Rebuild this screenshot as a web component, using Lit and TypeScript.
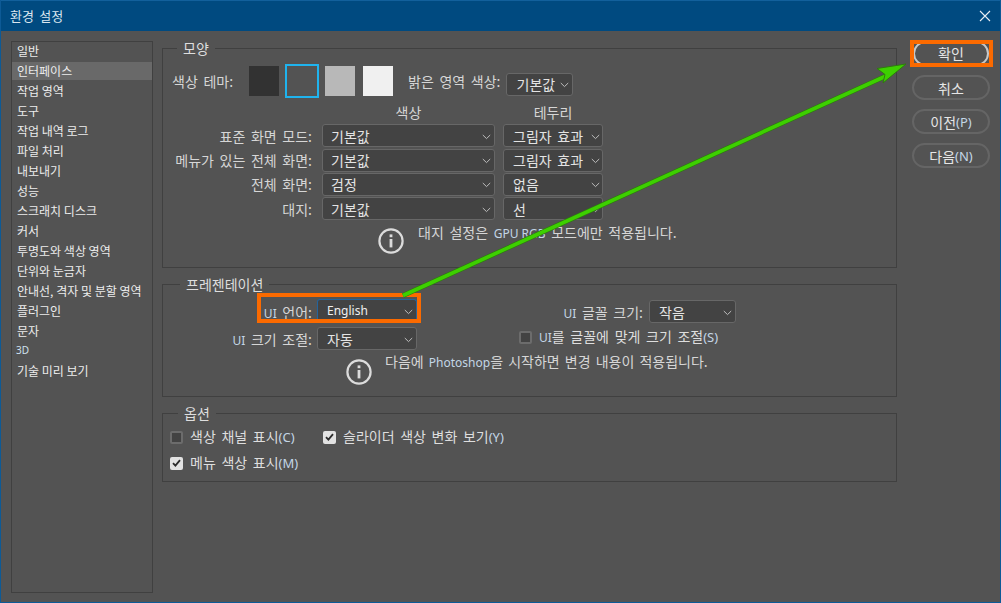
import { LitElement, html, css, svg } from "lit";
import { customElement } from "lit/decorators.js";

const NAV = ["일반","인터페이스","작업 영역","도구","작업 내역 로그","파일 처리","내보내기","성능","스크래치 디스크","커서","투명도와 색상 영역","단위와 눈금자","안내선, 격자 및 분할 영역","플러그인","문자","3D","기술 미리 보기"];

const chevron = html`<svg class="chev" width="9" height="6" viewBox="0 0 9 6"><path d="M.8 1 4.5 4.6 8.2 1" fill="none" stroke="#bdbdbd" stroke-width="1"/></svg>`;
const sel = (text: unknown, cls: string) => html`<div class="select ${cls}"><span>${text}</span>${chevron}</div>`;
const info = html`<svg class="info" width="26" height="26" viewBox="0 0 26 26"><circle cx="13" cy="13" r="11.6" fill="none" stroke="#dcdcdc" stroke-width="2.2"/><rect x="11.6" y="11" width="2.8" height="8.4" fill="#dcdcdc"/><rect x="11.6" y="6.4" width="2.8" height="2.8" fill="#dcdcdc"/></svg>`;
const check = (on: boolean, label: unknown) => html`<div class="check"><span class="box ${on ? "on" : ""}">${on ? html`<svg width="9" height="8" viewBox="0 0 9 8"><path d="M1 4.2 3.4 6.6 8 1.2" fill="none" stroke="#2b2b2b" stroke-width="1.8"/></svg>` : ""}</span><span class="lb">${label}</span></div>`;

@customElement("app-root")
export class AppRoot extends LitElement {
  static styles = css`
    :host { display: block; width: 1001px; height: 603px; position: relative; overflow: hidden;
      font-family: "Noto Sans CJK KR", sans-serif; font-size: 14px; color: #d6d6d6; word-spacing: 2.5px; }
    * { box-sizing: border-box; }
    .win { width: 100%; height: 100%; display: flex; flex-direction: column; background: #535353; border: 1px solid #0d5a96; border-top: 0; }
    .title { height: 31px; flex: none; background: #004a80; border-top: 1px solid #12609c; display: flex; align-items: center; justify-content: space-between;
      padding: 0 9px 1px 9px; color: #dbe6ef; font-size: 13px; }
    .title svg { display: block; }
    .content { flex: 1; min-height: 0; display: flex; padding: 10px 10px 9px 10px; }
    .nav { width: 142px; flex: none; border: 1px solid #404040; padding: 0; display: flex; flex-direction: column; gap: 2px; font-size: 12px; color: #ececec; word-spacing: 0; }
    .nav div { height: 18px; line-height: 17px; padding-left: 5px; white-space: nowrap; }
    .nav div.sel { background: #696969; }
    .nav .n3d { font-family: "Noto Sans", sans-serif; font-size: 10px; color: #cfe0ee; padding-left: 4px; }
    .main { width: 735px; flex: none; margin-left: 9px; padding-top: 7px; display: flex; flex-direction: column; gap: 16px; }
    .group { position: relative; border: 1px solid #404040; }
    .legend { position: absolute; top: -10px; background: #535353; height: 18px; line-height: 18px; padding: 0 6px; font-size: 14px; color: #dedede; }
    .g1 { height: 220px; } .g2 { height: 113px; } .g3 { height: 69px; }
    .theme { display: flex; align-items: center; height: 34px; margin: 15px 0 0 9px; }
    .swatch { width: 30px; height: 30px; flex: none; }
    .s1 { background: #323232; margin-left: 16px; }
    .s2 { width: 34px; height: 34px; background: #535353; border: 2px solid #1fb3ee; margin-left: 6px; }
    .s3 { background: #b8b8b8; margin-left: 6px; }
    .s4 { background: #f0f0f0; margin-left: 8px; }
    .hl { margin-left: 15px; }
    .w67 { width: 67px; height: 22px; margin-left: 5px; margin-top: 6px; padding-left: 9px; }
    .tbl { display: grid; grid-template-columns: 149px 183px 108px; grid-template-rows: 22px repeat(4, 23px); row-gap: 1.33px; margin-top: 3px; align-items: center; }
    .tbl .lab { text-align: right; white-space: nowrap; }
    .tbl .h { text-align: center; margin-top: -1px; }
    .tbl .select { margin-left: 10px; width: 173px; padding-left: 8px; }
    .tbl .select.c2 { margin-left: 8px; width: 100px; padding-left: 9px; padding-right: 2px; }
    .tbl .hc2 { margin-left: 8px; }
    .tbl .hc1 { margin-left: 10px; }
    .select { height: 23px; background: #434343; border: 1px solid #676767; border-radius: 3px; display: flex; align-items: center; justify-content: space-between;
      padding: 0 3px 0 10px; color: #e4e4e4; white-space: nowrap; flex: none; }
    .select span { line-height: 20px; }
    .chev { flex: none; display: block; margin-top: 2px; }
    .note { display: flex; align-items: flex-start; gap: 14px; white-space: nowrap; }
    .info { flex: none; display: block; margin-top: 5px; }
    .note span.t { line-height: 18px; }
    .n1 { margin: 3px 0 0 215px; }
    .n2 { margin: 2px 0 0 183px; gap: 13px; word-spacing: 2px; }
    .n2 .info { margin-top: 7px; }
    .en { font-family: "Noto Sans", sans-serif; font-size: 12px; color: #c3d6e6; word-spacing: 0; }
    .par { font-family: "Noto Sans", sans-serif; font-size: 13px; color: #c3d6e6; word-spacing: 0; }
    .pt { display: grid; grid-template-columns: 149px 105px 226px 93px; grid-template-rows: 23px 23px; row-gap: 4px; margin-top: 15px; align-items: center; }
    .pt .lab { text-align: right; white-space: nowrap; }
    .pt .select { width: 100px; margin-left: 5px; padding-left: 9px; }
    .pt .select.lang { height: 24px; margin-top: -1px; border-color: #24649c; border-bottom-color: #434343; }
    .pt .select.lang span { font-family: "Noto Sans", sans-serif; font-size: 12px; color: #f0f0f0; }
    .pt .select.small { width: 87px; margin-left: 6px; }
    .pt .chk { grid-column: 3 / span 2; margin-left: 102px; margin-top: -2px; }
    .opts { display: grid; grid-template-columns: 153px auto; grid-template-rows: 20px 20px; row-gap: 6px; justify-content: start; margin: 13px 0 0 7px; }
    .check { display: flex; align-items: center; gap: 7px; white-space: nowrap; color: #dedede; }
    .lb { margin-top: -3px; }
    .box { width: 13px; height: 13px; flex: none; background: #434343; border: 2px solid #6c6c6c; border-radius: 2px; display: flex; align-items: center; justify-content: center; }
    .box.on { background: #e2e2e2; border: 0; }
    .side { width: 78px; flex: none; margin-left: 15px; display: flex; flex-direction: column; gap: 9px; }
    .btn { height: 25px; border: 2px solid #656565; border-radius: 13px; display: flex; align-items: center; justify-content: center; color: #e6e6e6; word-spacing: 0; white-space: nowrap; line-height: 20px; }
    .btn.ok { border-color: #c8c8c8; margin: 0 1px; padding-bottom: 2px; }
    .frame { position: absolute; border: 4px solid #fb6a00; pointer-events: none; }
    .f1 { left: 910px; top: 40px; width: 83px; height: 27px; }
    .f2 { left: 257px; top: 293px; width: 164px; height: 30px; }
    .arrow { position: absolute; left: 0; top: 0; pointer-events: none; }
  `;

  render() {
    const ui = (t: string) => html`<span class="en">${t}</span>`;
    const par = (t: string) => html`<span class="par">${t}</span>`;
    return html`
      <div class="win">
        <div class="title"><span>환경 설정</span>
          <svg width="12" height="12" viewBox="0 0 12 12"><path d="M1 1 11 11M11 1 1 11" stroke="#e8eef3" stroke-width="1.1" fill="none"/></svg>
        </div>
        <div class="content">
          <div class="nav">${NAV.map((n, i) => html`<div class="${i === 1 ? "sel" : ""} ${n === "3D" ? "n3d" : ""}">${n}</div>`)}</div>
          <div class="main">
            <section class="group g1">
              <div class="legend" style="left:14px">모양</div>
              <div class="theme">
                <span>색상 테마:</span>
                <div class="swatch s1"></div><div class="swatch s2"></div><div class="swatch s3"></div><div class="swatch s4"></div>
                <span class="hl">밝은 영역 색상:</span>${sel("기본값", "w67")}
              </div>
              <div class="tbl">
                <span></span><span class="h hc1">색상</span><span class="h hc2">테두리</span>
                <span class="lab">표준 화면 모드:</span>${sel("기본값", "")}${sel("그림자 효과", "c2")}
                <span class="lab">메뉴가 있는 전체 화면:</span>${sel("기본값", "")}${sel("그림자 효과", "c2")}
                <span class="lab">전체 화면:</span>${sel("검정", "")}${sel("없음", "c2")}
                <span class="lab">대지:</span>${sel("기본값", "")}${sel("선", "c2")}
              </div>
              <div class="note n1">${info}<span class="t">대지 설정은 ${ui("GPU RGB")} 모드에만 적용됩니다.</span></div>
            </section>
            <section class="group g2">
              <div class="legend" style="left:17px">프레젠테이션</div>
              <div class="pt">
                <span class="lab">${ui("UI")} 언어:</span>${sel("English", "lang")}
                <span class="lab">${ui("UI")} 글꼴 크기:</span>${sel("작음", "small")}
                <span class="lab">${ui("UI")} 크기 조절:</span>${sel("자동", "")}
                <div class="chk">${check(false, html`${ui("UI")}를 글꼴에 맞게 크기 조절${par("(S)")}`)}</div>
              </div>
              <div class="note n2">${info}<span class="t">다음에 ${ui("Photoshop")}을 시작하면 변경 내용이 적용됩니다.</span></div>
            </section>
            <section class="group g3">
              <div class="legend" style="left:15px">옵션</div>
              <div class="opts">
                ${check(false, html`색상 채널 표시${par("(C)")}`)}
                ${check(true, html`슬라이더 색상 변화 보기${par("(Y)")}`)}
                ${check(true, html`메뉴 색상 표시${par("(M)")}`)}
              </div>
            </section>
          </div>
          <div class="side">
            <div class="btn ok">확인</div>
            <div class="btn">취소</div>
            <div class="btn">이전${par("(P)")}</div>
            <div class="btn">다음${par("(N)")}</div>
          </div>
        </div>
      </div>
      <div class="frame f1"></div>
      <div class="frame f2"></div>
      <svg class="arrow" width="1001" height="603" viewBox="0 0 1001 603">
        ${svg`<path d="M403 295.5 886 76" stroke="#2f7a10" stroke-width="5" fill="none"/>
        <path d="M403 295.5 886 76" stroke="#3dd000" stroke-width="3.6" fill="none"/>
        <path d="M906 64 877 68.5 885 74.5 883 83Z" fill="#3dd000" stroke="#2f7a10" stroke-width="1"/>`}
      </svg>
    `;
  }
}
